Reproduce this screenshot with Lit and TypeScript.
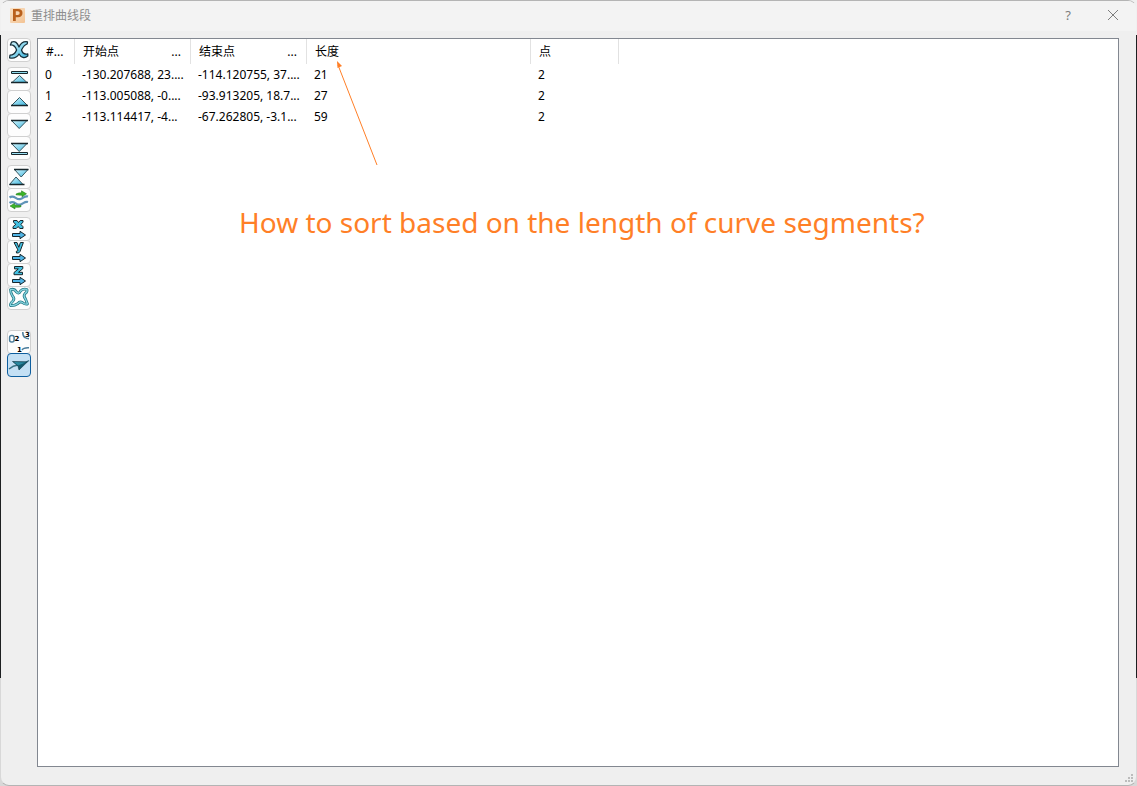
import { LitElement, html, svg, css, nothing } from "lit";
import { customElement, state } from "lit/decorators.js";

const EDGE = "#17262b";

const arrowRight = svg`<path d="M5.500 16.500h7.500v-2.200l5.500 3.700-5.500 3.700v-2.200h-7.500z" fill="#4fb4e6" stroke="#17262b" stroke-linejoin="round"/>`;

const icons: Record<string, unknown> = {
  remove: svg`<path d="M4.500 4.200C8 2.400 10.500 4.800 12 9C13.500 5.400 16 3.200 20.500 3.800L20.200 6C17.500 6.800 16 9 14.500 12C15.500 15.400 17 16.800 20.800 15.800L20.800 18C17.500 20.800 14 19.600 12 16C10 19.400 7 20.800 2.600 19.800L3 17.200C6 17.200 8.400 15 9.600 12C8.400 8.800 7 6.600 3.400 7Z" fill="url(#g)" stroke="#17303a" stroke-width="1.300" stroke-linejoin="round"/>`,
  top: svg`<path d="M4.500 4.500h16v2h-16z" fill="#8fdcee" stroke=${EDGE}/><path d="M12.500 8.500l7 7h-14z" fill="url(#g)"/><path d="M12.500 8.500l-7.500 7h15z" fill="none" stroke="#34545e"/><path d="M4 15.500h17" stroke=${EDGE} stroke-width="1.400"/>`,
  up: svg`<path d="M12.500 7.500l7.500 7.500h-15z" fill="url(#g)"/><path d="M12.500 7.500l-8 8h16z" fill="none" stroke="#34545e"/><path d="M4 15.500h17" stroke=${EDGE} stroke-width="1.400"/>`,
  down: svg`<path d="M4.500 7.500h15.500l-7.800 8z" fill="url(#g)" stroke="#34545e"/><path d="M4 7.500h17" stroke=${EDGE} stroke-width="1.400"/>`,
  bottom: svg`<path d="M4.500 7.500h15.500l-7.800 8z" fill="url(#g)" stroke="#34545e"/><path d="M4 7.500h17" stroke=${EDGE} stroke-width="1.400"/><path d="M4.500 16.500h16v2h-16z" fill="#9be0f4" stroke=${EDGE}/>`,
  reverse: svg`<path d="M7.500 4.500h13.500l-6.800 7.500z" fill="url(#g)" stroke="#34545e"/><path d="M7 4.500h14.500" stroke=${EDGE} stroke-width="1.300"/><path d="M9 12l7 7.500h-13.500z" fill="url(#g)" stroke="#34545e"/><path d="M2.500 19.500h15" stroke=${EDGE} stroke-width="1.300"/>`,
  flip: svg`<path d="M2.500 9.500c5-3.500 6.500 3 11 1.500 3-1 4.500-3.500 7.500-2.500M2.500 15c5-3.500 6.500 3 11 1.500 3-1 4.500-3.500 7.500-2.500" fill="none" stroke="#5f93b8" stroke-width="2.200"/><path d="M9 6q2.500-1.500 5.500-1.200V2.800l5 3-4.500 3V7.200q-3 .200-6-.400z" fill="#3cb529" stroke="#187014" stroke-width=".5"/><path d="M14 18.800q-2.500.800-6 .400v1.800l-5-3 4.500-2.600v1.600q3 .500 6.500.400z" fill="#3cb529" stroke="#187014" stroke-width=".5"/>`,
  x: svg`<path d="M6.500 3.500h3.500l1.500 2 1.700-2h2.800v1.800l-2.200 2 2.200 2.400v1.800h-3.200l-1.600-2-2 2H6v-1.800l2.800-2.400-2.300-2z" fill="#42bfe0" stroke=${EDGE} stroke-linejoin="round"/>${arrowRight}`,
  y: svg`<path d="M7 2.500h3l1.800 4.800 1.600-4.800h3l-3.400 9q-.800 2-3.500 1.500l-.2-1.700q1.500 0 1.700-1.200z" fill="#42bfe0" stroke=${EDGE} stroke-linejoin="round"/>${arrowRight}`,
  z: svg`<path d="M7.500 3.500h8.300v2.200l-4.300 3.600h4v2.400H7v-2.200l4.300-3.600H7.500z" fill="#42bfe0" stroke=${EDGE} stroke-linejoin="round"/>${arrowRight}`,
  curve: svg`<path d="M3.500 3.500Q7.500 2.500 9.500 6Q12 8.500 13.500 5Q16 2.500 20 3.500Q20.500 6 18 7.500Q16 10 18.500 13L20.500 18Q17 18.500 15.500 16.500Q12.500 15 11 17.500Q7 20 3.500 19.500Q3 17.500 6 15Q8 12.500 5.500 10Q3.500 7 3.500 3.500Z" fill="#fff" stroke="#287b88" stroke-width="2.800" stroke-linejoin="round"/><path d="M3.500 3.500Q7.500 2.500 9.500 6Q12 8.500 13.500 5Q16 2.500 20 3.500Q20.500 6 18 7.500Q16 10 18.500 13L20.500 18Q17 18.500 15.500 16.500Q12.500 15 11 17.500Q7 20 3.500 19.500Q3 17.500 6 15Q8 12.500 5.500 10Q3.500 7 3.500 3.500Z" fill="none" stroke="#8bd9e4" stroke-width="1.200" stroke-linejoin="round"/>`,
  numbers: svg`<rect x="2.600" y="5.600" width="4.500" height="6.400" rx="2" fill="#fff" stroke="#4a7c9b" stroke-width="1.500"/><path d="M15.800 2q-.200 4 2.200 5.500 1.500 1.200 4 1.300M15 20q1.500-2.500 7-2.200" fill="none" stroke="#4a7c9b" stroke-width="1.500"/><text x="7.500" y="11">2</text><text x="18" y="7">3</text><text x="10" y="22">1</text>`,
  direction: svg`<path d="M2 16q4-3.500 9-4t11-4.500" fill="none" stroke="#3b7285" stroke-width="1.400"/><path d="M5.500 8.500l15 .300-8.500 8.200-1-4z" fill="#155a6e" stroke="#0c3643" stroke-width=".6"/><path d="M7 9l11.500.400-7.500 3z" fill="#2b8aa1"/>`,
};

const groups: { name: string; label: string }[][] = [
  [{ name: "remove", label: "删除" }],
  [
    { name: "top", label: "移到顶部" },
    { name: "up", label: "上移" },
    { name: "down", label: "下移" },
    { name: "bottom", label: "移到底部" },
  ],
  [
    { name: "reverse", label: "反转顺序" },
    { name: "flip", label: "反转方向" },
  ],
  [
    { name: "x", label: "X" },
    { name: "y", label: "Y" },
    { name: "z", label: "Z" },
    { name: "curve", label: "自动排序" },
  ],
  [
    { name: "numbers", label: "显示编号" },
    { name: "direction", label: "显示方向" },
  ],
];

@customElement("tool-button")
class ToolButton extends LitElement {
  static properties = {
    icon: { type: String },
    label: { type: String },
    active: { type: Boolean },
  };
  declare icon: string;
  declare label: string;
  declare active: boolean;

  static styles = css`
    :host {
      display: block;
    }
    .button {
      display: block;
      box-sizing: border-box;
      width: 24px;
      height: 24px;
      padding: 0;
      border: 1px solid #d0d0d0;
      border-radius: 4px;
      background: #fdfdfd;
    }
    .active {
      border-color: #0f5f9f;
      background: #c4e0f4;
    }
    .icon {
      display: block;
      margin: -1px;
      width: 24px;
      height: 24px;
    }
    .icon text {
      font: bold 7px "DejaVu Sans", sans-serif;
    }
  `;

  render() {
    return html`<button
      class="button ${this.active ? "active" : ""}"
      aria-label=${this.label}
      aria-pressed=${this.active ? "true" : nothing}
    >
      <svg class="icon" viewBox="0 0 24 24" aria-hidden="true">
        <defs>
          <linearGradient id="g" x1="0" y1="0" x2="1" y2="1">
            <stop offset="0" stop-color="#d6f7ff" />
            <stop offset="1" stop-color="#3cb4dc" />
          </linearGradient>
        </defs>
        ${icons[this.icon]}
      </svg>
    </button>`;
  }
}

@customElement("app-root")
class AppRoot extends LitElement {
  @state() rows = [
    ["0", "-130.207688, 23....", "-114.120755, 37....", "21", "2"],
    ["1", "-113.005088, -0....", "-93.913205, 18.7...", "27", "2"],
    ["2", "-113.114417, -4...", "-67.262805, -3.1...", "59", "2"],
  ];

  static styles = css`
    :host {
      display: block;
      height: 100vh;
      background: linear-gradient(#f0f0f0 35px, #1d1f21 35px, #1d1f21 678px, #d8d8d8 678px);
      font: 12px/20px "Noto Sans", "Noto Sans CJK SC", sans-serif;
      color: #000;
    }
    .window {
      box-sizing: border-box;
      height: 100%;
      display: flex;
      flex-direction: column;
      border: 1px solid #b4b4b4;
      border-left-color: transparent;
      border-right-color: transparent;
      border-radius: 9px;
      background: #efefef;
      background-clip: padding-box;
      overflow: hidden;
      position: relative;
    }
    .titlebar {
      display: flex;
      align-items: center;
      height: 28px;
      padding: 0 11px 2px 8px;
      background: #f3f3f3;
      color: #8d8d8d;
    }
    .logo {
      width: 16px;
      height: 16px;
      margin-right: 6px;
    }
    .title {
      flex: 1;
      margin: 0;
      font: 12px/28px "Noto Sans CJK SC", sans-serif;
    }
    .caption {
      display: flex;
      align-items: center;
      justify-content: center;
      width: 24px;
      height: 24px;
      margin-left: 21px;
      padding: 0;
      border: 0;
      background: none;
      color: #7d7d7d;
      font: 13px/24px "Noto Sans", sans-serif;
    }
    .body {
      flex: 1;
      min-height: 0;
      display: flex;
      gap: 6px;
      padding: 7px 17px 18px 6px;
    }
    .tools {
      display: flex;
      flex-direction: column;
      gap: 5px;
    }
    .group {
      display: flex;
      flex-direction: column;
    }
    .group > * + * {
      margin-top: -1px;
    }
    .group:last-child {
      margin-top: 15px;
    }
    .panel {
      flex: 1;
      min-width: 0;
      position: relative;
      border: 1px solid #828790;
      background: #fff;
    }
    .table {
      table-layout: fixed;
      width: 581px;
      border-collapse: separate;
      border-spacing: 0;
    }
    .c0 {
      width: 37px;
    }
    .c1 {
      width: 116px;
    }
    .c3 {
      width: 224px;
    }
    .c4 {
      width: 88px;
    }
    th {
      box-sizing: border-box;
      height: 25px;
      padding: 0 9px 0 8px;
      border-right: 1px solid #e2e2e2;
      font-weight: 400;
      text-align: left;
      white-space: nowrap;
    }
    .split {
      display: flex;
      justify-content: space-between;
    }
    td {
      box-sizing: border-box;
      height: 21px;
      padding: 0 0 0 7px;
      white-space: nowrap;
    }
    .arrow {
      position: absolute;
      left: 296px;
      top: 20px;
      width: 48px;
      height: 110px;
    }
    .note {
      position: absolute;
      left: 201px;
      top: 163px;
      margin: 0;
      font-size: 28px;
      line-height: 40px;
      color: #ff7f27;
      white-space: nowrap;
    }
    .grip {
      position: absolute;
      right: 3px;
      bottom: 2px;
      width: 9px;
      height: 9px;
    }
  `;

  render() {
    return html`
      <main class="window">
        <header class="titlebar">
          <svg class="logo" viewBox="0 0 16 16" aria-hidden="true">
            <defs>
              <linearGradient id="p" x2="1" y2="1">
                <stop offset="0" stop-color="#f9e3c8" />
                <stop offset="1" stop-color="#f3c292" />
              </linearGradient>
            </defs>
            <rect x="1" y="1" width="15" height="15" rx="1" fill="url(#p)" />
            <path d="M4 2h5q4.500 0 4.500 4T9 10.300H6.800V14H4zM6.800 4.300v3.700H8.700q2 0 2-1.900T8.700 4.300z" fill="#b9601c" fill-rule="evenodd" />
          </svg>
          <h1 class="title">重排曲线段</h1>
          <button class="caption" aria-label="帮助">?</button>
          <button class="caption" aria-label="关闭">
            <svg width="12" height="12" viewBox="0 0 12 12" aria-hidden="true">
              <path d="M1 1l10 10M11 1L1 11" stroke="#7d7d7d" />
            </svg>
          </button>
        </header>
        <div class="body">
          <nav class="tools">
            ${groups.map(
              (group) => html`<div class="group">
                ${group.map(
                  (b) => html`<tool-button
                    .icon=${b.name}
                    .label=${b.label}
                    .active=${b.name === "direction"}
                  ></tool-button>`
                )}
              </div>`
            )}
          </nav>
          <section class="panel">
            <table class="table">
              <colgroup>
                <col class="c0" />
                <col class="c1" />
                <col class="c1" />
                <col class="c3" />
                <col class="c4" />
              </colgroup>
              <thead>
                <tr>
                  <th>#...</th>
                  <th><div class="split"><span>开始点</span><span>...</span></div></th>
                  <th><div class="split"><span>结束点</span><span>...</span></div></th>
                  <th>长度</th>
                  <th>点</th>
                </tr>
              </thead>
              <tbody>
                ${this.rows.map((row) => html`<tr>${row.map((cell) => html`<td>${cell}</td>`)}</tr>`)}
              </tbody>
            </table>
            <svg class="arrow" viewBox="0 0 48 110" aria-hidden="true">
              <path d="M43 106L4 6" stroke="#ff7f27" fill="none" />
              <path d="M3 2l.500 7 4.500-2z" fill="#ff7f27" />
            </svg>
            <p class="note">How to sort based on the length of curve segments?</p>
          </section>
        </div>
        <svg class="grip" viewBox="0 0 9 9" aria-hidden="true">
          <path d="M7 0h2v2h-2zM7 3h2v2h-2zM7 6h2v2h-2zM4 3h2v2h-2zM4 6h2v2h-2zM1 6h2v2h-2z" fill="#bcbcbc" />
        </svg>
      </main>
    `;
  }
}
